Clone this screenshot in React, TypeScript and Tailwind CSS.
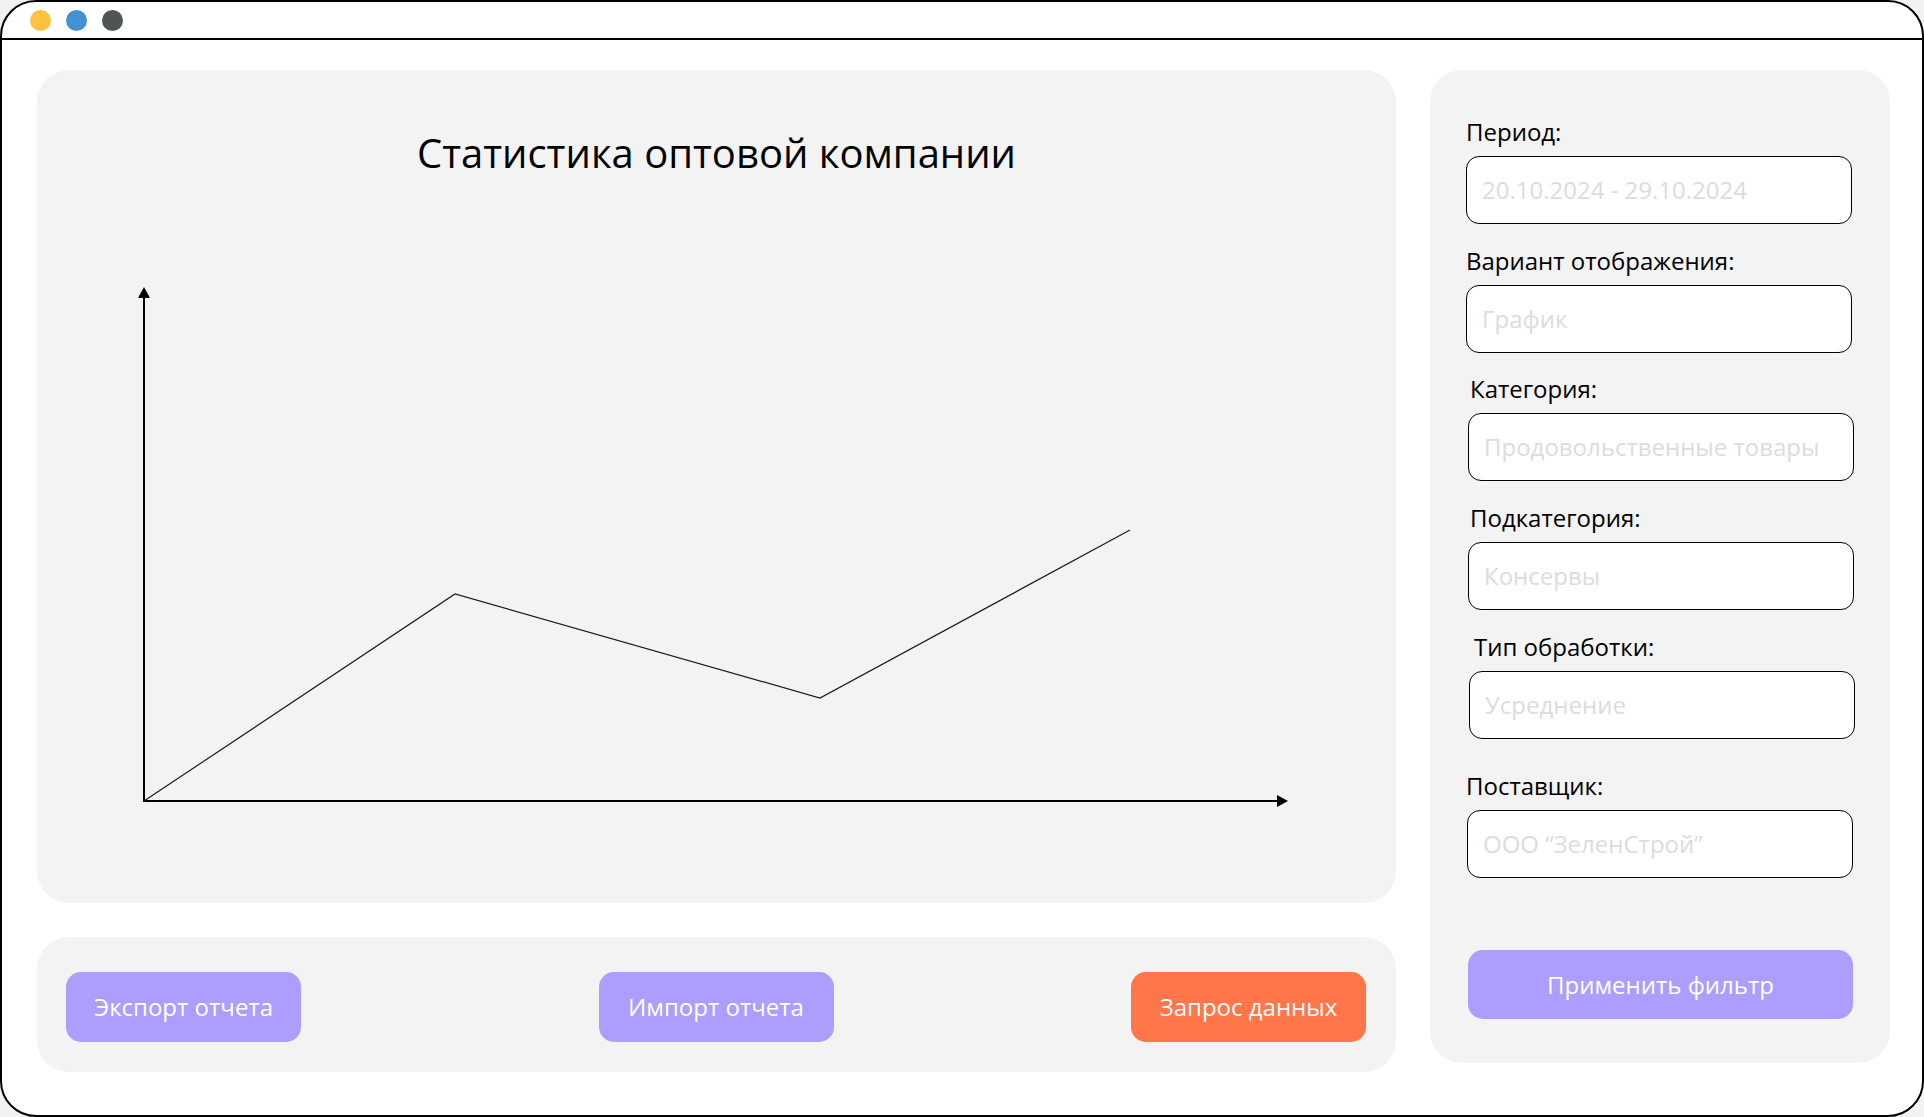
import React from "react";

const fields = [
  { label: "Период:", value: "20.10.2024 - 29.10.2024", lx: "ml-0", ix: "ml-0", gap: "mt-0" },
  { label: "Вариант отображения:", value: "График", lx: "ml-0", ix: "ml-0", gap: "mt-[22px]" },
  { label: "Категория:", value: "Продовольственные товары", lx: "ml-[4px]", ix: "ml-[2px]", gap: "mt-[21px]" },
  { label: "Подкатегория:", value: "Консервы", lx: "ml-[4px]", ix: "ml-[2px]", gap: "mt-[22px]" },
  { label: "Тип обработки:", value: "Усреднение", lx: "ml-[8px]", ix: "ml-[3px]", gap: "mt-[22px]" },
  { label: "Поставщик:", value: "ООО “ЗеленСтрой”", lx: "ml-0", ix: "ml-[1px]", gap: "mt-[32px]" },
];

function Chart() {
  return (
    <svg width="1359" height="726" viewBox="0 0 1359 726" className="block">
      {/* axes */}
      <line x1="107" y1="625" x2="107" y2="118" stroke="#000" strokeWidth="2" />
      <polygon points="107,110 101,121 113,121" fill="#000" />
      <line x1="106" y1="624" x2="1243" y2="624" stroke="#000" strokeWidth="2" />
      <polygon points="1251,624 1240,618 1240,630" fill="#000" />
      {/* data */}
      <polyline
        points="107,624 418,417 783,521 1093,353"
        fill="none"
        stroke="#1a1a1a"
        strokeWidth="1.2"
      />
    </svg>
  );
}

export default function App() {
  return (
    <div
      className="w-[1924px] h-[1117px] bg-[#f2f2f2]"
      style={{ fontFamily: '"Open Sans", "Noto Sans", sans-serif' }}
    >
      <div className="w-full h-full bg-white border-2 border-black rounded-[36px] flex flex-col overflow-hidden">
        {/* Window bar */}
        <div className="h-[38px] border-b-2 border-black flex items-center gap-[15px] pl-[28px] shrink-0">
          <span className="w-[21px] h-[21px] rounded-full bg-[#ffc240]" />
          <span className="w-[21px] h-[21px] rounded-full bg-[#4392d3]" />
          <span className="w-[21px] h-[21px] rounded-full bg-[#505553]" />
        </div>

        <div className="flex gap-[34px] pt-[30px] pl-[35px]">
          {/* Left column */}
          <div className="w-[1359px] flex flex-col gap-[34px]">
            <div className="h-[833px] bg-[#f3f3f3] rounded-[32px] pt-[59px] overflow-hidden">
              <h1 className="text-[40px] leading-[48px] text-black text-center">
                Статистика оптовой компании
              </h1>
              <Chart />
            </div>

            <div className="h-[135px] bg-[#f3f3f3] rounded-[32px] pl-[29px] pr-[30px] pt-[35px] flex justify-between items-start">
              <button className="w-[235px] h-[70px] rounded-[15px] bg-[#ab9efc] text-white text-[24px]">
                Экспорт отчета
              </button>
              <button className="w-[235px] h-[70px] rounded-[15px] bg-[#ab9efc] text-white text-[24px]">
                Импорт отчета
              </button>
              <button className="w-[235px] h-[70px] rounded-[15px] bg-[#ff764b] text-white text-[24px]">
                Запрос данных
              </button>
            </div>
          </div>

          {/* Filters */}
          <div className="w-[460px] h-[993px] bg-[#f3f3f3] rounded-[32px] pt-[47px] pl-[36px] flex flex-col">
            {fields.map((f) => (
              <div key={f.label} className={`flex flex-col ${f.gap}`}>
                <label className={`text-[24px] leading-[30px] text-black ${f.lx}`}>{f.label}</label>
                <div
                  className={`mt-[9px] w-[386px] h-[68px] rounded-[13px] border border-black bg-white flex items-center pl-[15px] text-[24px] text-[#dcdcdc] ${f.ix}`}
                >
                  {f.value}
                </div>
              </div>
            ))}
            <button className="mt-[72px] ml-[2px] w-[385px] h-[69px] rounded-[15px] bg-[#ab9efc] text-white text-[24px]">
              Применить фильтр
            </button>
          </div>
        </div>
      </div>
    </div>
  );
}
